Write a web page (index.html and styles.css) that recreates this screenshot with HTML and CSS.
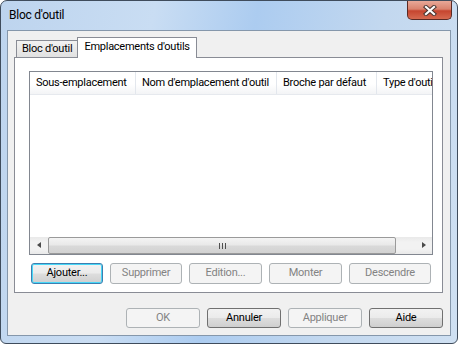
FILE: index.html
```html
<!DOCTYPE html>
<html lang="fr">
<head>
    <meta charset="UTF-8">
    <title>Bloc d'outil</title>
    <link rel="stylesheet" href="styles.css">
</head>
<body>
    <div class="window">
        <div class="titlebar">
            <span class="title">Bloc d'outil</span>
            <div class="close-btn">
                <svg width="14" height="11" viewBox="0 0 14 11">
                    <path d="M3 2 L11 9 M11 2 L3 9" stroke="#4a3632" stroke-width="4.2" stroke-linecap="square"/>
                    <path d="M3 2 L11 9 M11 2 L3 9" stroke="#ffffff" stroke-width="2.2" stroke-linecap="square"/>
                </svg>
            </div>
        </div>

        <div class="client">
            <div class="tabs">
                <div class="tab">Bloc d'outil</div>
                <div class="tab active">Emplacements d'outils</div>
            </div>

            <div class="tab-panel">
                <div class="listview">
                    <div class="list-header">
                        <div class="col col-sub">Sous-emplacement</div>
                        <div class="col col-name">Nom d'emplacement d'outil</div>
                        <div class="col col-pin">Broche par défaut</div>
                        <div class="col col-type">Type d'outil</div>
                    </div>
                    <div class="list-body"></div>
                    <div class="hscroll">
                        <div class="arrow arrow-left"></div>
                        <div class="track">
                            <div class="thumb"><span class="grip"></span></div>
                        </div>
                        <div class="arrow arrow-right"></div>
                    </div>
                </div>

                <div class="list-buttons">
                    <div class="btn default btn-add">Ajouter...</div>
                    <div class="btn disabled btn-del">Supprimer</div>
                    <div class="btn disabled btn-edit">Edition...</div>
                    <div class="btn disabled btn-up">Monter</div>
                    <div class="btn disabled btn-down">Descendre</div>
                </div>
            </div>

            <div class="dialog-buttons">
                <div class="btn disabled">OK</div>
                <div class="btn">Annuler</div>
                <div class="btn disabled">Appliquer</div>
                <div class="btn">Aide</div>
            </div>
        </div>
    </div>
</body>
</html>
```

FILE: styles.css
```css
body {
    margin: 0;
    font-family: "Segoe UI", Roboto, sans-serif;
    font-size: 11px;
    letter-spacing: -0.25px;
    color: #000;
    background: #fff;
}

.window {
    box-sizing: border-box;
    width: 458px;
    height: 344px;
    border: 1px solid #3f4c5c;
    border-radius: 7px 7px 6px 6px;
    padding: 0 6px 7px 6px;
    background: linear-gradient(100deg, #bdd4ee 0%, #c9ddf3 30%, #acccf0 50%, #c3d8ef 75%, #cfe0f2 100%);
    display: flex;
    flex-direction: column;
}

/* title bar */
.titlebar {
    height: 29px;
    display: flex;
    align-items: flex-start;
}

.title {
    font-size: 12px;
    margin: 6px 0 0 2px;
    line-height: 16px;
}

.close-btn {
    margin-left: auto;
    margin-right: -1px;
    width: 45px;
    height: 19px;
    box-sizing: border-box;
    border: 1px solid #5a2a24;
    border-top: none;
    border-radius: 0 0 5px 5px;
    background: linear-gradient(to bottom, #e8a898 0%, #d9836e 45%, #c6452f 55%, #d66a50 100%);
    display: flex;
    align-items: center;
    justify-content: center;
}

/* client area */
.client {
    flex: 1;
    border: 1px solid #8597ab;
    background: #f0f0f0;
    padding: 6px 7px 0 6px;
    display: flex;
    flex-direction: column;
}

.tabs {
    display: flex;
    align-items: flex-end;
    height: 20px;
    padding-left: 2px;
    position: relative;
    z-index: 1;
}

.tab {
    box-sizing: border-box;
    height: 17px;
    line-height: 15px;
    padding: 0 5px;
    border: 1px solid #898c95;
    border-bottom: none;
    background: linear-gradient(to bottom, #f2f2f2, #e1e1e1);
}

.tab.active {
    height: 21px;
    margin-bottom: -1px;
    line-height: 17px;
    padding: 0 6px;
    margin-left: -1px;
    background: #fff;
}

.tab-panel {
    box-sizing: border-box;
    width: 429px;
    height: 236px;
    border: 1px solid #898c95;
    background: #fff;
    padding: 13px 0 0 14px;
}

/* list view */
.listview {
    box-sizing: border-box;
    width: 404px;
    height: 184px;
    border: 1px solid #828790;
    display: flex;
    flex-direction: column;
    overflow: hidden;
}

.list-header {
    display: flex;
    height: 22px;
    flex-shrink: 0;
    background: linear-gradient(to bottom, #ffffff 0%, #ffffff 55%, #f3f4f6 100%);
    border-bottom: 1px solid #e6e9ee;
    white-space: nowrap;
}

.col {
    box-sizing: border-box;
    line-height: 22px;
    padding-left: 6px;
    border-right: 1px solid #e3e7ed;
    overflow: hidden;
    flex-shrink: 0;
}

.col-sub { width: 106px; }
.col-name { width: 141px; }
.col-pin { width: 100px; }
.col-type { width: 80px; border-right: none; }

.list-body {
    flex: 1;
}

.hscroll {
    height: 17px;
    flex-shrink: 0;
    display: flex;
    background: linear-gradient(to bottom, #e9e9e9, #f2f2f2 30%, #f2f2f2 70%, #e9e9e9);
}

.arrow {
    width: 17px;
    position: relative;
}

.arrow::after {
    content: "";
    position: absolute;
    top: 5px;
    border-top: 3.5px solid transparent;
    border-bottom: 3.5px solid transparent;
}

.arrow-left::after {
    left: 7px;
    border-right: 4px solid #4a4a4a;
}

.arrow-right::after {
    left: 7px;
    border-left: 4px solid #4a4a4a;
}

.track {
    flex: 1;
    padding: 0 1px;
}

.thumb {
    box-sizing: border-box;
    height: 17px;
    width: 348px;
    border: 1px solid #9a9a9a;
    border-radius: 2px;
    background: linear-gradient(to bottom, #f4f4f4 0%, #e9e9e9 45%, #d9d9d9 55%, #d2d2d2 100%);
    display: flex;
    align-items: center;
    justify-content: center;
}

.grip {
    width: 7px;
    height: 6px;
    background: repeating-linear-gradient(to right, #505050 0, #505050 1px, transparent 1px, transparent 3px);
}

/* buttons */
.btn {
    box-sizing: border-box;
    height: 21px;
    border: 1px solid #707070;
    border-radius: 3px;
    background: linear-gradient(to bottom, #f2f2f2 0%, #ebebeb 48%, #dddddd 52%, #cfcfcf 100%);
    text-align: center;
    line-height: 18px;
    width: 75px;
}

.btn.disabled {
    border-color: #adb2b5;
    background: #f4f4f4;
    color: #838383;
}

.btn.default {
    border-color: #3c7fb1;
    box-shadow: inset 0 0 0 1px #48d7f7;
}

.list-buttons {
    display: flex;
    gap: 7px;
    margin: 8px 0 0 2px;
}

.btn-add { width: 72px; }
.btn-del { width: 72px; }
.btn-edit { width: 73px; }
.btn-up { width: 73px; }
.btn-down { width: 82px; }

.dialog-buttons {
    display: flex;
    justify-content: flex-end;
    gap: 7px;
    margin-top: 15px;
}

.dialog-buttons .btn {
    width: 74px;
    height: 20px;
    line-height: 17px;
}
```
